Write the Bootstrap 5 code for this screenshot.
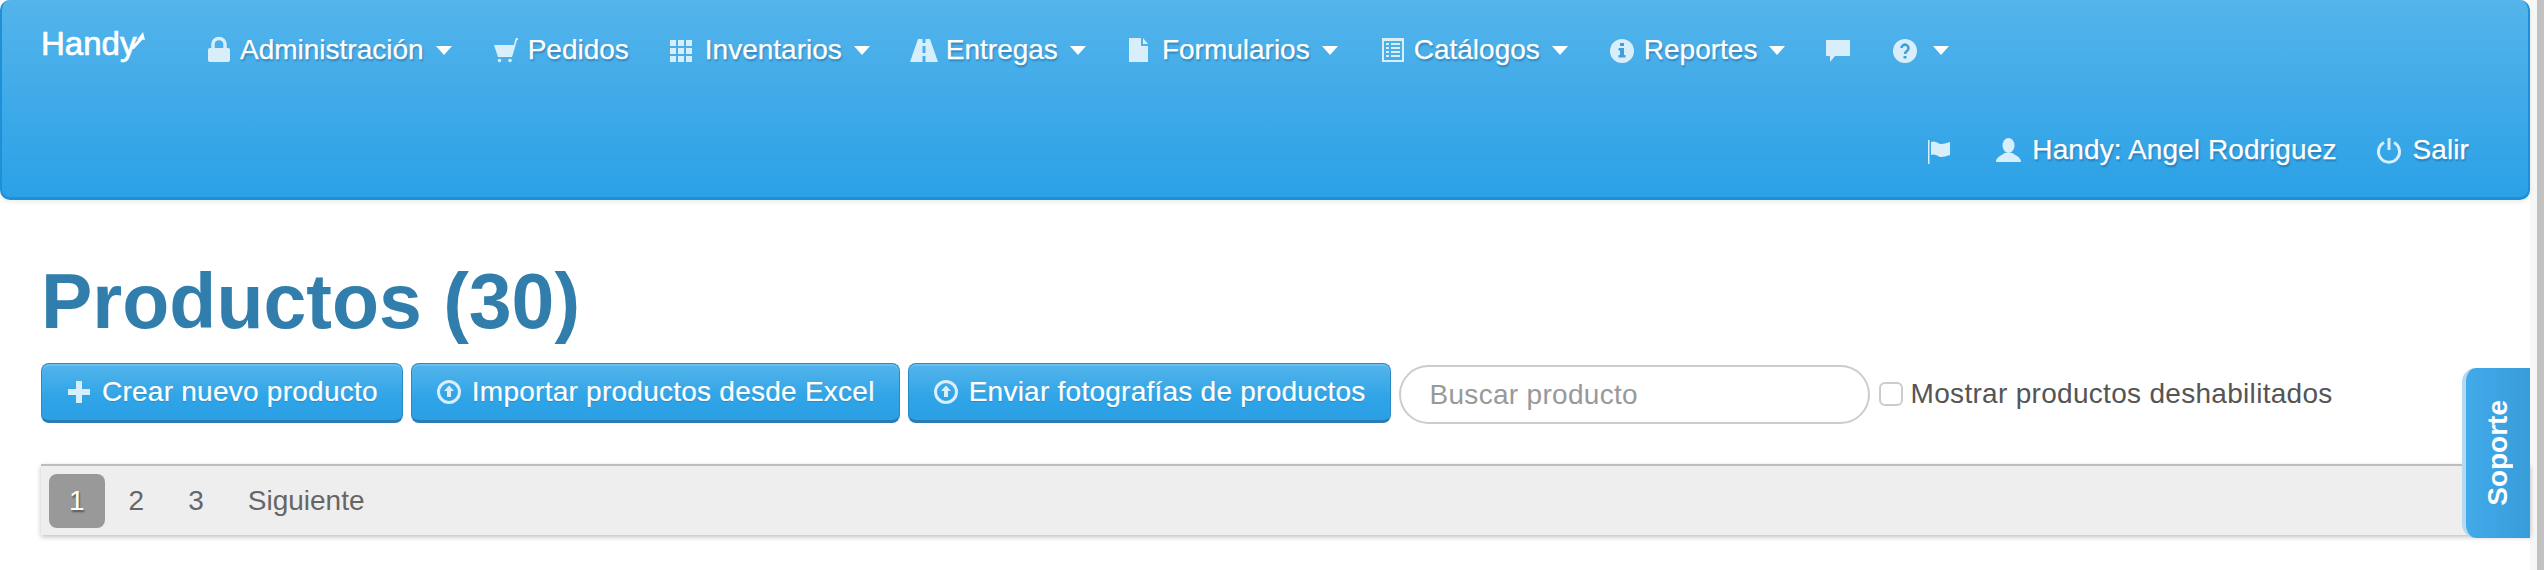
<!DOCTYPE html>
<html lang="es">

<head>
    <title>Productos</title>
    <meta charset="utf-8">
    <meta name="viewport" content="width=device-width, initial-scale=1">
    <link href="https://cdn.jsdelivr.net/npm/bootstrap@5.3.1/dist/css/bootstrap.min.css" rel="stylesheet">
    <script src="https://cdn.jsdelivr.net/npm/bootstrap@5.3.1/dist/js/bootstrap.bundle.min.js"></script>
    <style>
        html, body { height: 570px; overflow: hidden; }
        body { font-family: "Liberation Sans", Arial, sans-serif; font-size: 28px; color: #555; background: #fff; }
        .page-wrap { width: 2544px; height: 570px; }
        .page-main { width: 2530px; height: 570px; position: relative; }
        .fake-scroll { width: 14px; background: #c1c1c1; border-left: 7px solid #f6f6f6; }

        /* top bar */
        .hdy-nav { height: 200px; background: linear-gradient(#54b4eb, #2ba1e6); border: 2px solid #1d90d8; border-width: 0 2px 3px 2px; border-radius: 10px; box-shadow: 0 2px 4px rgba(0, 0, 0, .08); align-items: flex-start; align-content: flex-start; padding: 0; }
        .hdy-row { height: 100px; }
        .hdy-row-end { padding-right: 39px; }
        .hdy-brand { position: relative; color: #fff; font-size: 33px; line-height: 40px; margin: 24px 40px 0 39px; padding: 0; width: 103px; -webkit-text-stroke: .7px #fff; }
        .hdy-brand:hover { color: #fff; }
        .hdy-arrow { position: absolute; left: 88px; top: 7px; width: 16px; height: 18px; }
        .hdy-nav .navbar-nav .nav-link { display: flex; align-items: center; height: 100px; color: #fff; font-size: 28px; line-height: 40px; padding: 0 20px; text-shadow: 1px 2px 2px rgba(0, 40, 90, .35); -webkit-text-stroke: .25px #fff; }
        .hdy-row-end .navbar-nav .nav-link { letter-spacing: .1px; }
        .hdy-nav .dropdown-toggle::after { margin-left: 12px; border-top: 9px solid #fff; border-left: 8px solid transparent; border-right: 8px solid transparent; border-bottom: 0; vertical-align: middle; }
        .ico { width: 28px; height: 28px; flex: none; margin-right: 8px; fill: #d9eefb; }
        .ico-solo { margin-right: 0; }
        .ico-cut { fill: #3d9fdc; }

        /* heading and toolbar */
        .page-body { padding: 57px 0 0 41px; }
        .page-title { color: #317eac; font-size: 77px; font-weight: 700; line-height: 88px; margin: 0 0 18px 0; }
        .tool-row { height: 61px; gap: 8px; }
        .btn-hdy { display: flex; align-items: center; height: 60px; padding: 0 24px; color: #fff; font-size: 28px; letter-spacing: .25px; background: linear-gradient(#54b4eb, #2fa4e7 60%, #2a9fe4); border: 1px solid #2a8ac6; border-bottom: 3px solid #2a7cb2; border-radius: 8px; box-shadow: inset 0 2px 0 rgba(255, 255, 255, .15); text-shadow: 0 1px 1px rgba(0, 0, 0, .15); -webkit-text-stroke: .2px #fff; }
        .btn-hdy:hover { color: #fff; }
        .search-box { width: 471px; height: 59px; margin-top: 2px; padding: 0 29px; font-size: 28px; letter-spacing: .3px; color: #555; border: 2px solid #ccc; border-radius: 30px; font-family: inherit; box-shadow: none; }
        .search-box::placeholder { color: #999; }
        .chk-wrap { margin: 0 0 0 1px; padding: 0; min-height: 0; color: #555; font-size: 28px; line-height: 40px; letter-spacing: .3px; }
        .chk-wrap .form-check-input { float: none; width: 24px; height: 24px; margin: 0; border: 2px solid #ccc; border-radius: 6px; vertical-align: -3px; }
        .chk-wrap .form-check-label { display: inline; }

        /* pager */
        .pager-bar { height: 71px; margin-top: 40px; padding: 8px; background: #eee; border-top: 2px solid #bdbdbd; box-shadow: 0 2px 5px rgba(0, 0, 0, .25); }
        .pager-bar .pagination { gap: 5px; margin: 0; }
        .pager-bar .page-link { height: 54px; padding: 0 20px; line-height: 54px; font-size: 28px; color: #666; background: transparent; border: 0; border-radius: 8px !important; }
        .pager-bar .active .page-link { color: #fff; background: #999; text-shadow: 1px 2px 2px rgba(0, 0, 0, .45); }

        /* side tab */
        .help-tab { position: absolute; right: 0; top: 368px; width: 68px; height: 170px; display: flex; align-items: center; justify-content: center; color: #fff; font-size: 28px; font-weight: 700; background: linear-gradient(90deg, #42aaea, #389cd9); border-left: 4px solid #b5d9ee; border-radius: 14px 0 0 14px; }
        .help-tab span { writing-mode: vertical-rl; transform: rotate(180deg); }
    </style>
</head>

<body>

    <svg width="0" height="0" class="position-absolute">
        <symbol id="i-lock" viewBox="0 0 28 28"><rect x="4" y="12" width="22" height="14" rx="2"/><path d="M9 13V8a6 5.500 0 0 1 12 0v5" fill="none" stroke="#d9eefb" stroke-width="3.400"/></symbol>
        <symbol id="i-cart" viewBox="0 0 28 28"><path d="M2 9h20l1-5 1-2h2v2h-1l-4 14-1 3H6l-1-3z"/><circle cx="7.500" cy="24.500" r="1.800"/><circle cx="18" cy="24.500" r="1.800"/></symbol>
        <symbol id="i-grid" viewBox="0 0 28 28"><path d="M1 4h6v6H1zM9 4h6v6H9zM17 4h6v6h-6zM1 12h6v6H1zM9 12h6v6H9zM17 12h6v6h-6zM1 20h6v6H1zM9 20h6v6H9zM17 20h6v6h-6z"/></symbol>
        <symbol id="i-road" viewBox="0 0 28 28"><path fill-rule="evenodd" d="M8 3h4.500v4h3V3H20l8 23H15.500v-6h-3v6H0zM12.500 10v7h3v-7z"/></symbol>
        <symbol id="i-file" viewBox="0 0 28 28"><path d="M3 2h12v8h7v16H3zM17 2l5 6h-5z"/></symbol>
        <symbol id="i-list" viewBox="0 0 28 28"><path fill-rule="evenodd" d="M4 2h22v24H4zM6 5v19h18V5z"/><path d="M8 7h3v2H8zM13 7h9v2h-9zM8 11h3v2H8zM13 11h9v2h-9zM8 15h3v2H8zM13 15h9v2h-9zM8 19h3v2H8zM13 19h9v2h-9z"/></symbol>
        <symbol id="i-info" viewBox="0 0 28 28"><circle cx="14" cy="15" r="12"/><path class="ico-cut" d="M12 7h4v3h-4zM10.500 12h5.500v7h1.500v2.500h-7V19H12v-4.500h-1.500z"/></symbol>
        <symbol id="i-chat" viewBox="0 0 28 28"><path d="M1 4h24v16H10l-5 6v-6H1z"/></symbol>
        <symbol id="i-ask" viewBox="0 0 28 28"><circle cx="12" cy="15" r="12"/><path d="M8.500 12a3.500 3.500 0 1 1 5.500 3c-1.500 1-2 1.500-2 3" fill="none" stroke="#3d9fdc" stroke-width="2.600"/><path class="ico-cut" d="M10.500 20h3v2.500h-3z"/></symbol>
        <symbol id="i-flag" viewBox="0 0 28 28"><path d="M0 4h1.500v24H0zM3 6c5-2 7 2 10 2 3 0 5-1 9-2v13c-4 1-6 2-9 2-3 0-5-4-10-2z"/></symbol>
        <symbol id="i-user" viewBox="0 0 28 28"><ellipse cx="12.500" cy="9.500" rx="6" ry="7.500"/><path d="M0 26c0-5 5-6 8.500-9h8c3.500 3 8.500 4 8.500 9z"/></symbol>
        <symbol id="i-power" viewBox="0 0 28 28"><path d="M8 6.500a10.500 10.500 0 1 0 10 0" fill="none" stroke="#d9eefb" stroke-width="3"/><path d="M11.500 2h3v12h-3z"/></symbol>
        <symbol id="i-plus" viewBox="0 0 28 28"><path d="M10 3h6v8h8v6h-8v8h-6v-8H2v-6h8z"/></symbol>
        <symbol id="i-up" viewBox="0 0 28 28"><circle cx="13" cy="14" r="10.500" fill="none" stroke="#d9eefb" stroke-width="3"/><path d="M13 7.500l5 5.500h-3v6h-4v-6H8z"/></symbol>
    </svg>

    <div class="page-wrap d-flex">
        <div class="page-main">

            <nav class="navbar navbar-expand flex-wrap hdy-nav">
                <div class="hdy-row w-100 d-flex">
                    <a class="navbar-brand hdy-brand" href="#">Handy
                        <svg class="hdy-arrow" viewBox="0 0 16 18"><path d="M14 1l2 8-2.500-.500L5 18H1l8.500-9.500L8 9z" fill="#fff"/></svg>
                    </a>
                    <ul class="navbar-nav">
                        <li class="nav-item"><a class="nav-link dropdown-toggle" href="#"><svg class="ico"><use href="#i-lock"/></svg>Administración</a></li>
                        <li class="nav-item"><a class="nav-link" href="#"><svg class="ico"><use href="#i-cart"/></svg>Pedidos</a></li>
                        <li class="nav-item"><a class="nav-link dropdown-toggle" href="#"><svg class="ico"><use href="#i-grid"/></svg>Inventarios</a></li>
                        <li class="nav-item"><a class="nav-link dropdown-toggle" href="#"><svg class="ico"><use href="#i-road"/></svg>Entregas</a></li>
                        <li class="nav-item"><a class="nav-link dropdown-toggle" href="#"><svg class="ico"><use href="#i-file"/></svg>Formularios</a></li>
                        <li class="nav-item"><a class="nav-link dropdown-toggle" href="#"><svg class="ico"><use href="#i-list"/></svg>Catálogos</a></li>
                        <li class="nav-item"><a class="nav-link dropdown-toggle" href="#"><svg class="ico"><use href="#i-info"/></svg>Reportes</a></li>
                        <li class="nav-item"><a class="nav-link" href="#"><svg class="ico ico-solo"><use href="#i-chat"/></svg></a></li>
                        <li class="nav-item"><a class="nav-link dropdown-toggle" href="#"><svg class="ico ico-solo"><use href="#i-ask"/></svg></a></li>
                    </ul>
                </div>
                <div class="hdy-row hdy-row-end w-100 d-flex justify-content-end">
                    <ul class="navbar-nav">
                        <li class="nav-item"><a class="nav-link" href="#"><svg class="ico ico-solo"><use href="#i-flag"/></svg></a></li>
                        <li class="nav-item"><a class="nav-link" href="#"><svg class="ico"><use href="#i-user"/></svg>Handy: Angel Rodriguez</a></li>
                        <li class="nav-item"><a class="nav-link" href="#"><svg class="ico"><use href="#i-power"/></svg>Salir</a></li>
                    </ul>
                </div>
            </nav>

            <div class="page-body">
                <h1 class="page-title">Productos (30)</h1>

                <div class="tool-row d-flex">
                    <a class="btn btn-hdy" href="#"><svg class="ico"><use href="#i-plus"/></svg>Crear nuevo producto</a>
                    <a class="btn btn-hdy" href="#"><svg class="ico"><use href="#i-up"/></svg>Importar productos desde Excel</a>
                    <a class="btn btn-hdy" href="#"><svg class="ico"><use href="#i-up"/></svg>Enviar fotografías de productos</a>
                    <input type="text" class="form-control search-box" placeholder="Buscar producto">
                    <div class="form-check chk-wrap align-self-center">
                        <input class="form-check-input" type="checkbox" id="showDisabled">
                        <label class="form-check-label" for="showDisabled">Mostrar productos deshabilitados</label>
                    </div>
                </div>

                <div class="pager-bar">
                    <ul class="pagination">
                        <li class="page-item active"><a class="page-link" href="#">1</a></li>
                        <li class="page-item"><a class="page-link" href="#">2</a></li>
                        <li class="page-item"><a class="page-link" href="#">3</a></li>
                        <li class="page-item"><a class="page-link" href="#">Siguiente</a></li>
                    </ul>
                </div>
            </div>

            <a class="help-tab text-decoration-none" href="#"><span>Soporte</span></a>
        </div>
        <div class="fake-scroll"></div>
    </div>

</body>

</html>
